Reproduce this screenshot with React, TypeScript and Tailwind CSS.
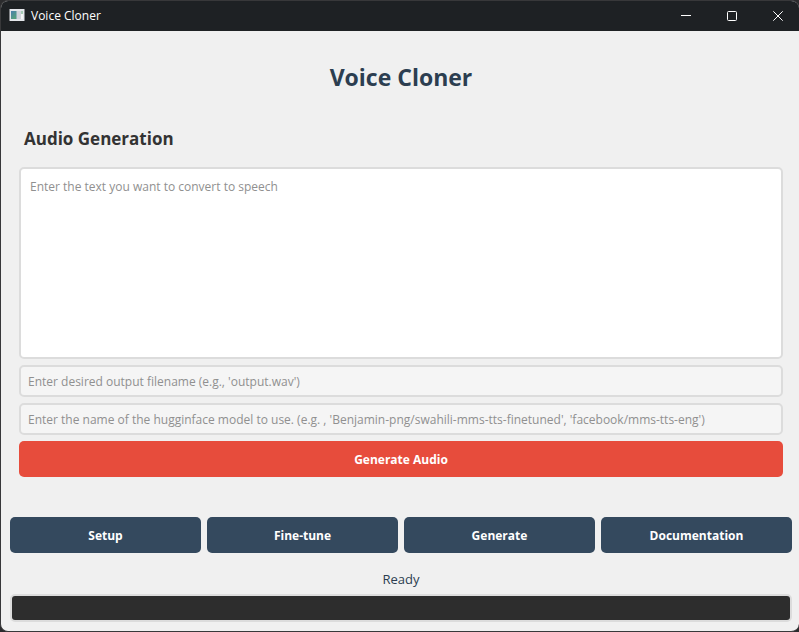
const navItems = ['Setup', 'Fine-tune', 'Generate', 'Documentation'];

function AppIcon() {
  return (
    <svg width="16" height="16" viewBox="0 0 16 16" aria-hidden="true">
      <defs>
        <linearGradient id="pane" x1="0" y1="0" x2="0.6" y2="1">
          <stop offset="0" stopColor="#4a7fae" />
          <stop offset="1" stopColor="#55a07c" />
        </linearGradient>
      </defs>
      <rect x="0.5" y="1" width="15" height="12" fill="#e4e6ea" />
      <rect x="2" y="3" width="5" height="8" fill="url(#pane)" />
      <rect x="7" y="3" width="1" height="8" fill="#8fb3b8" />
      <rect x="8" y="3" width="4" height="8" fill="#d0d3da" />
      <rect x="12" y="3" width="2" height="3" fill="#a5cbb4" />
      <rect x="12" y="6" width="2" height="5" fill="#f5f5f5" />
    </svg>
  );
}

function TitleBar() {
  const control = 'flex h-[30px] w-[42px] items-center justify-center';
  return (
    <header className="flex h-[30px] shrink-0 items-center gap-1 bg-[#1e2124] text-white">
      <div className="flex flex-1 items-center gap-[6px] pl-[8px]">
        <AppIcon />
        <span className="text-[12px] leading-[16px]">Voice Cloner</span>
      </div>
      <button type="button" aria-label="Minimize" className={control}>
        <svg width="10" height="10" viewBox="0 0 10 10" stroke="currentColor"><path d="M0 4.5h10" /></svg>
      </button>
      <button type="button" aria-label="Maximize" className={control}>
        <svg width="10" height="10" viewBox="0 0 10 10" fill="none" stroke="currentColor"><rect x="0.5" y="0.5" width="9" height="9" rx="1" /></svg>
      </button>
      <button type="button" aria-label="Close" className={control}>
        <svg width="10" height="10" viewBox="0 0 10 10" stroke="currentColor"><path d="M0.3 0.3l9.4 9.4M9.7 0.3L0.3 9.7" /></svg>
      </button>
    </header>
  );
}

export default function App() {
  const field =
    'h-8 w-full rounded-[5px] border-2 border-[#dcdcdc] bg-[#f5f5f5] px-[7px] text-[12px] leading-[16px] text-[#333333] placeholder:text-[#909090] outline-none';
  return (
    <div className="flex min-h-screen flex-col bg-[#2b2b2d] font-['Open_Sans','Segoe_UI',sans-serif]">
      <div className="flex flex-1 flex-col overflow-hidden rounded-lg border border-r-0 border-[#38383a] bg-[#f0f0f0]">
        <TitleBar />
        <main className="flex flex-1 flex-col pt-[30px] pr-[7px] pb-[9px] pl-[9px]">
          <h1 className="text-center text-[23px] leading-[32px] font-bold text-[#2c3e50]">Voice Cloner</h1>
          <section className="mt-[34px] flex flex-1 flex-col px-[9px]">
            <h2 className="px-[5px] text-[17px] leading-[24px] font-bold text-[#333333]">Audio Generation</h2>
            <form className="mt-4 flex flex-1 flex-col gap-[6px]" onSubmit={(e) => e.preventDefault()}>
              <textarea
                aria-label="Text to convert to speech"
                placeholder="Enter the text you want to convert to speech"
                className="min-h-24 w-full flex-1 resize-none rounded-[5px] border-2 border-[#dcdcdc] bg-white px-[9px] py-[10px] text-[12px] leading-[16px] text-[#333333] outline-none placeholder:text-[#909090]"
              />
              <input
                type="text"
                aria-label="Output filename"
                placeholder="Enter desired output filename (e.g., 'output.wav')"
                className={field}
              />
              <input
                type="text"
                aria-label="Model name"
                placeholder="Enter the name of the hugginface model to use. (e.g. , 'Benjamin-png/swahili-mms-tts-finetuned', 'facebook/mms-tts-eng')"
                className={field}
              />
              <button type="submit" className="h-9 w-full rounded-[5px] bg-[#e74c3c] pt-px text-[12px] leading-[16px] font-bold text-white">
                Generate Audio
              </button>
            </form>
          </section>
          <nav className="mt-10 grid grid-cols-4 gap-[6px]">
            {navItems.map((item) => (
              <button key={item} type="button" className="h-9 rounded-[5px] bg-[#34495e] pt-px text-[12px] leading-[16px] font-bold text-white">
                {item}
              </button>
            ))}
          </nav>
          <p id="status" className="mt-4 text-center text-[13px] leading-[20px] text-[#2c3e50]">Ready</p>
          <progress
            aria-labelledby="status"
            value={0}
            max={100}
            className="mt-[5px] block h-7 w-full appearance-none overflow-hidden rounded-[5px] border-2 border-[#dcdcdc] bg-[#2d2d2d] [&::-webkit-progress-bar]:bg-[#2d2d2d] [&::-webkit-progress-value]:bg-[#e74c3c]"
          />
        </main>
      </div>
    </div>
  );
}
